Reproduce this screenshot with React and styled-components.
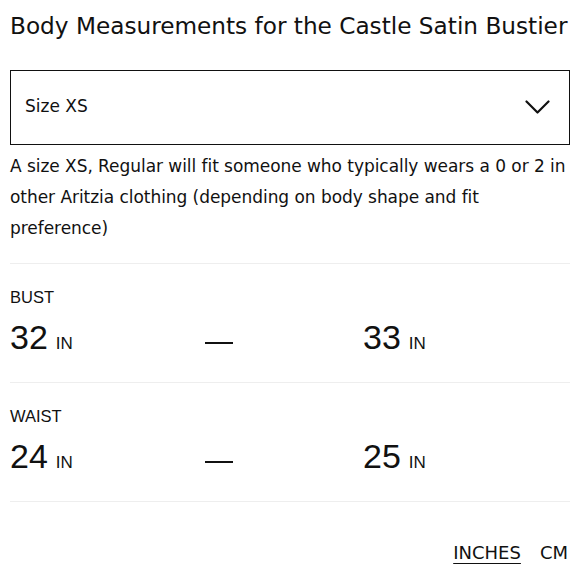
import styled, { createGlobalStyle } from "styled-components";

// body measurements panel: size select, fit note, measurement rows and unit toggle

const GlobalStyle = createGlobalStyle`
    body {
        margin: 0;
        background: #fff;
        color: #111;
        font-family: "DejaVu Sans", "Noto Sans", sans-serif;
    }
`

const measurements = [
    { label: "BUST", min: 32, max: 33 },
    { label: "WAIST", min: 24, max: 25 },
];

const App = () => {
    return (
        <Wrapper>
            <GlobalStyle />
            <Title>Body Measurements for the Castle Satin Bustier</Title>
            <Select>
                <SelectText>Size XS</SelectText>
                <svg width="25" height="15" viewBox="0 0 25 15" fill="none">
                    <path d="M1.5 1.5 L12.5 12.5 L23.5 1.5" stroke="#111" strokeWidth="2.2" strokeLinecap="round" strokeLinejoin="round" />
                </svg>
            </Select>
            <Note>
                A size XS, Regular will fit someone who typically wears a 0 or 2 in other Aritzia clothing (depending on body shape and fit preference)
            </Note>
            <Rows>
                {measurements.map((m) => (
                    <Row key={m.label}>
                        <Label>{m.label}</Label>
                        <Values>
                            <Value>{m.min}<Unit>IN</Unit></Value>
                            <Dash />
                            <Value>{m.max}<Unit>IN</Unit></Value>
                        </Values>
                    </Row>
                ))}
            </Rows>
            <Units>
                <UnitButton $active>INCHES</UnitButton>
                <UnitButton>CM</UnitButton>
            </Units>
        </Wrapper>
    );
}

const Wrapper = styled.div`
    width: 560px;
    padding: 10px 10px 0 10px;
`

const Title = styled.h1`
    margin: 0;
    font-size: 23.2px;
    font-weight: 400;
    line-height: 32px;
    white-space: nowrap;
`

const Select = styled.div`
    margin-top: 28px;
    height: 73px;
    border: 1.5px solid #111;
    display: flex;
    align-items: center;
    justify-content: space-between;
    padding: 0 19px 0 14px;
`

const SelectText = styled.span`
    font-size: 17px;
    margin-top: -4px;
`

const Note = styled.p`
    margin: 6px 0 0 0;
    font-size: 17px;
    letter-spacing: -0.05px;
    line-height: 31px;
`

const Rows = styled.div`
    margin-top: 19px;
    border-top: 1px solid #eee;
`

const Row = styled.div`
    border-bottom: 1px solid #eee;
    padding: 22px 0 22px 0;
    height: 74px;
`

const Label = styled.div`
    font-family: "Liberation Sans", Arial, sans-serif;
    font-size: 16.5px;
    line-height: 22px;
`

const Values = styled.div`
    display: grid;
    grid-template-columns: 195px 158px auto;
    align-items: center;
    margin-top: 9px;
`

const Value = styled.div`
    font-family: "Liberation Sans", Arial, sans-serif;
    font-size: 34px;
    line-height: 40px;
    display: flex;
    align-items: baseline;
    gap: 8px;
`

const Unit = styled.span`
    font-size: 17px;
`

const Dash = styled.div`
    width: 28px;
    height: 2px;
    background: #111;
    margin-top: 4px;
`

const Units = styled.div`
    display: flex;
    justify-content: flex-end;
    gap: 19px;
    margin-top: 39px;
    padding-right: 2px;
`

const UnitButton = styled.span`
    font-size: 18px;
    line-height: 24px;
    text-decoration: ${(p) => (p.$active ? "underline" : "none")};
    text-underline-offset: 4px;
`

export default App;
